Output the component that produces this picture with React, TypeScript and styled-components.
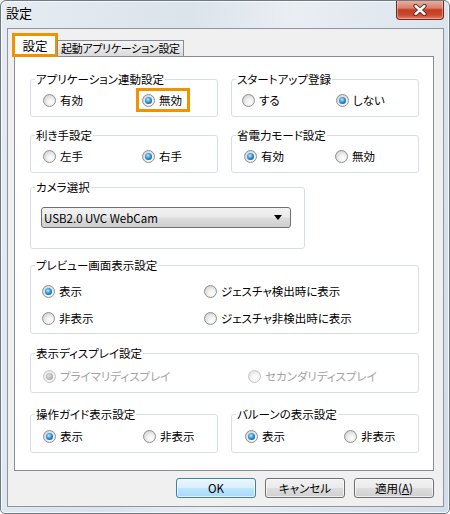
import React from 'react';
import styled, { createGlobalStyle, css } from 'styled-components';

const GlobalStyle = createGlobalStyle`
  html, body {
    margin: 0;
    padding: 0;
    background: #ffffff;
  }
  body {
    font-family: "Noto Sans CJK JP", "Noto Sans", sans-serif;
    font-feature-settings: "palt";
    color: #000;
  }
`;

const Window = styled.div`
  width: 450px;
  height: 514px;
  box-sizing: border-box;
  display: flex;
  flex-direction: column;
  border: 1px solid #6f7a87;
  border-radius: 6px 6px 5px 5px;
  background: linear-gradient(100deg, #e6ecf2 0%, #dbe3eb 35%, #e9eef3 55%, #d3dde7 100%);
  box-shadow: inset 0 0 0 1px rgba(255, 255, 255, 0.7);
  overflow: hidden;
`;

const TitleBar = styled.div`
  height: 27px;
  flex: none;
  display: flex;
  justify-content: space-between;
  align-items: flex-start;
  padding: 0 5px 0 5px;
`;

const Title = styled.div`
  font-size: 13px;
  line-height: 16px;
  margin-top: 4px;
`;

const CloseButton = styled.div`
  width: 48px;
  height: 20px;
  margin-top: -1px;
  box-sizing: border-box;
  border: 1px solid #6a2a21;
  border-top: none;
  border-radius: 0 0 4px 4px;
  background: linear-gradient(180deg, #eab3a5 0%, #d9806b 42%, #c23e25 52%, #c9492e 78%, #e07c61 100%);
  display: flex;
  align-items: center;
  justify-content: center;
  box-shadow: inset 0 0 0 1px rgba(255, 220, 210, 0.45);
`;

const Client = styled.div`
  flex: 1;
  margin: 0 5px 6px 6px;
  border: 1px solid #8b97a4;
  background: #f0f0f0;
  padding: 4px 9px 8px 6px;
  display: flex;
  flex-direction: column;
`;

const TabStrip = styled.div`
  display: flex;
  align-items: flex-end;
  margin-bottom: -1px;
  position: relative;
  z-index: 1;
`;

const Tab = styled.div<{ $active?: boolean }>`
  box-sizing: border-box;
  white-space: nowrap;
  ${(p) =>
    p.$active
      ? css`
          width: 46px;
          height: 24px;
          margin-left: -2px;
          border: 3px solid #f39200;
          background: #ffffff;
          text-align: center;
          line-height: 16px;
          padding-top: 2px;
          font-size: 12.5px;
        `
      : css`
          height: 16px;
          margin-left: -1px;
          margin-bottom: 1px;
          padding: 0 3px 0 3px;
          border: 1px solid #898c95;
          border-bottom: none;
          background: linear-gradient(180deg, #f4f4f4 0%, #e8e8e8 50%, #dadada 100%);
          line-height: 15px;
          font-size: 11px;
          letter-spacing: -0.3px;
        `}
`;

const Panel = styled.div`
  height: 415px;
  box-sizing: border-box;
  border: 1px solid #898c95;
  background: #ffffff;
  padding: 14px 14px 0 15px;
  display: flex;
  flex-direction: column;
`;

const Row = styled.div<{ $top?: number }>`
  display: grid;
  grid-template-columns: 188px 188px;
  column-gap: 13px;
  margin-top: ${(p) => p.$top ?? 0}px;
`;

const Group = styled.fieldset<{ $width?: number; $top?: number }>`
  margin: ${(p) => p.$top ?? 0}px 0 0 0;
  padding: 0;
  min-width: 0;
  width: ${(p) => (p.$width ? `${p.$width}px` : 'auto')};
  box-sizing: border-box;
  border: 1px solid #d5dfe5;
  border-radius: 3px;
`;

const Legend = styled.legend`
  margin-left: 4px;
  padding: 0 1px;
  font-size: 11.5px;
  line-height: 16px;
`;

const Options = styled.div<{ $pad: number; $cols: string; $pt?: number; $pb?: number }>`
  display: grid;
  grid-template-columns: ${(p) => p.$cols};
  row-gap: 11px;
  padding: ${(p) => p.$pt ?? 5}px 0 ${(p) => p.$pb ?? 8}px ${(p) => p.$pad}px;
`;

const Option = styled.label<{ $highlight?: boolean; $disabled?: boolean }>`
  display: inline-flex;
  align-items: center;
  gap: 4px;
  height: 16px;
  font-size: 11.5px;
  line-height: 16px;
  white-space: nowrap;
  justify-self: start;
  color: ${(p) => (p.$disabled ? '#a3a3a3' : '#000')};
  ${(p) =>
    p.$highlight &&
    css`
      padding: 1px 5px 1px 3px;
      margin: -1px -5px -1px -3px;
      outline: 3px solid #f39200;
    `}
`;

const RadioDot = styled.span<{ $checked?: boolean; $disabled?: boolean }>`
  width: 13px;
  height: 13px;
  box-sizing: border-box;
  border-radius: 50%;
  flex: none;
  border: 1px solid ${(p) => (p.$disabled ? '#c4c4c4' : '#8f8f8f')};
  background: ${(p) =>
    p.$disabled
      ? 'radial-gradient(circle at 60% 65%, #ffffff 0%, #f4f4f4 40%, #e2e2e2 85%)'
      : 'radial-gradient(circle at 62% 66%, #ffffff 0%, #f1f1f1 35%, #cfcfcf 85%)'};
  display: flex;
  align-items: center;
  justify-content: center;

  &::after {
    content: '';
    display: ${(p) => (p.$checked ? 'block' : 'none')};
    width: 7px;
    height: 7px;
    border-radius: 50%;
    background: ${(p) =>
      p.$disabled
        ? 'radial-gradient(circle at 40% 40%, #e4e4e4 0%, #b8b8b8 50%, #9c9c9c 100%)'
        : 'radial-gradient(circle at 42% 38%, #c9eeff 0%, #3ba2e6 38%, #0f4f8f 85%)'};
  }
`;

const CameraBody = styled.div`
  padding: 12px 13px 20px 10px;
`;

const Select = styled.div`
  height: 21px;
  box-sizing: border-box;
  border: 1px solid #707070;
  border-radius: 3px;
  background: linear-gradient(180deg, #f2f2f2 0%, #ebebeb 48%, #dddddd 52%, #cfcfcf 100%);
  display: flex;
  align-items: center;
  justify-content: space-between;
  padding: 0 8px 0 2px;
  font-size: 11.5px;
`;

const Arrow = styled.span`
  width: 0;
  height: 0;
  border-left: 4px solid transparent;
  border-right: 4px solid transparent;
  border-top: 5px solid #000;
`;

const ButtonRow = styled.div`
  display: flex;
  justify-content: flex-end;
  gap: 9px;
  margin-top: 7px;
`;

const DialogButton = styled.div<{ $default?: boolean }>`
  width: 80px;
  height: 20px;
  box-sizing: border-box;
  border-radius: 3px;
  font-size: 11.5px;
  line-height: 18px;
  text-align: center;
  ${(p) =>
    p.$default
      ? css`
          border: 1px solid #3c7fb1;
          background: linear-gradient(180deg, #eaf6fd 0%, #d9f0fc 48%, #bee6fd 52%, #a7d9f5 100%);
          box-shadow: inset 0 0 0 1px #ffffffb0;
        `
      : css`
          border: 1px solid #707070;
          background: linear-gradient(180deg, #f2f2f2 0%, #ebebeb 48%, #dddddd 52%, #cfcfcf 100%);
          box-shadow: inset 0 0 0 1px #fcfcfcb0;
        `}
`;

type Opt = { label: string; checked?: boolean; highlight?: boolean };

const RadioGroup = ({
  title,
  options,
  pad,
  cols,
  pt,
  pb,
  top,
  disabled,
}: {
  title: string;
  options: Opt[];
  pad: number;
  cols: string;
  pt?: number;
  pb?: number;
  top?: number;
  disabled?: boolean;
}) => (
  <Group $top={top}>
    <Legend>{title}</Legend>
    <Options $pad={pad} $cols={cols} $pt={pt} $pb={pb}>
      {options.map((o) => (
        <Option key={o.label} $highlight={o.highlight} $disabled={disabled}>
          <RadioDot $checked={o.checked} $disabled={disabled} />
          {o.label}
        </Option>
      ))}
    </Options>
  </Group>
);

const CloseIcon = () => (
  <svg width="14" height="12" viewBox="0 0 14 12">
    <path d="M2.5 2 L11.5 10 M11.5 2 L2.5 10" stroke="#5a1d14" strokeWidth="4.2" strokeLinecap="round" />
    <path d="M2.5 2 L11.5 10 M11.5 2 L2.5 10" stroke="#ffffff" strokeWidth="2.4" strokeLinecap="round" />
  </svg>
);

export default function App() {
  return (
    <>
      <GlobalStyle />
      <Window>
        <TitleBar>
          <Title>設定</Title>
          <CloseButton>
            <CloseIcon />
          </CloseButton>
        </TitleBar>
        <Client>
          <TabStrip>
            <Tab $active>設定</Tab>
            <Tab>起動アプリケーション設定</Tab>
          </TabStrip>
          <Panel>
            <Row>
              <RadioGroup
                title="アプリケーション連動設定"
                pad={12}
                cols="99px 1fr"
                options={[{ label: '有効' }, { label: '無効', checked: true, highlight: true }]}
              />
              <RadioGroup
                title="スタートアップ登録"
                pad={10}
                cols="94px 1fr"
                options={[{ label: 'する' }, { label: 'しない', checked: true }]}
              />
            </Row>
            <Row $top={10}>
              <RadioGroup
                title="利き手設定"
                pad={12}
                cols="99px 1fr"
                options={[{ label: '左手' }, { label: '右手', checked: true }]}
              />
              <RadioGroup
                title="省電力モード設定"
                pad={12}
                cols="91px 1fr"
                options={[{ label: '有効', checked: true }, { label: '無効' }]}
              />
            </Row>
            <Group $width={275} $top={6}>
              <Legend>カメラ選択</Legend>
              <CameraBody>
                <Select>
                  <span>USB2.0 UVC WebCam</span>
                  <Arrow />
                </Select>
              </CameraBody>
            </Group>
            <RadioGroup
              top={8}
              title="プレビュー画面表示設定"
              pad={11}
              cols="162px 1fr"
              pt={10}
              pb={7}
              options={[
                { label: '表示', checked: true },
                { label: 'ジェスチャ検出時に表示' },
                { label: '非表示' },
                { label: 'ジェスチャ非検出時に表示' },
              ]}
            />
            <RadioGroup
              top={11}
              title="表示ディスプレイ設定"
              pad={12}
              cols="205px 1fr"
              pt={7}
              pb={8}
              disabled
              options={[{ label: 'プライマリディスプレイ', checked: true }, { label: 'セカンダリディスプレイ' }]}
            />
            <Row $top={13}>
              <RadioGroup
                title="操作ガイド表示設定"
                pad={12}
                cols="100px 1fr"
                pt={6}
                options={[{ label: '表示', checked: true }, { label: '非表示' }]}
              />
              <RadioGroup
                title="バルーンの表示設定"
                pad={13}
                cols="99px 1fr"
                pt={6}
                options={[{ label: '表示', checked: true }, { label: '非表示' }]}
              />
            </Row>
          </Panel>
          <ButtonRow>
            <DialogButton $default>OK</DialogButton>
            <DialogButton>キャンセル</DialogButton>
            <DialogButton>
              適用(<u>A</u>)
            </DialogButton>
          </ButtonRow>
        </Client>
      </Window>
    </>
  );
}
